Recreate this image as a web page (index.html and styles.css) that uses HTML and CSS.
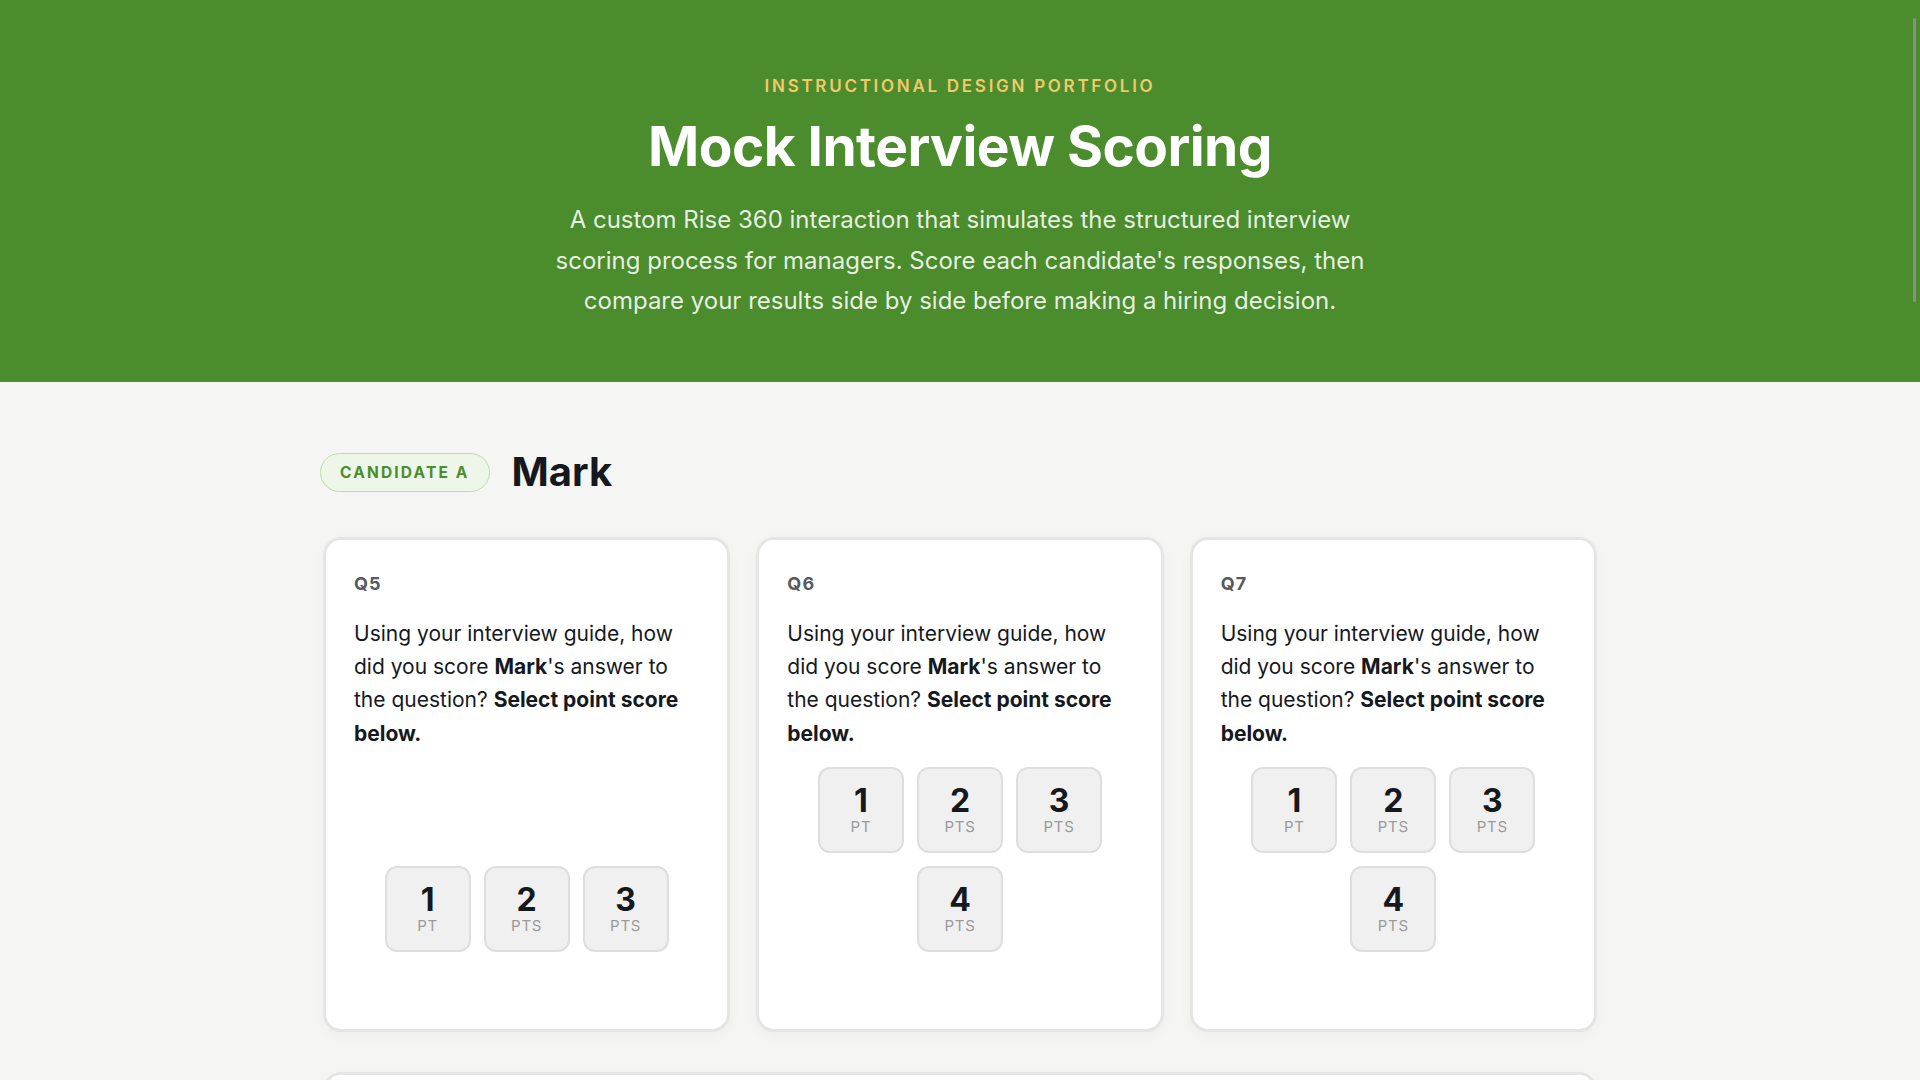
FILE: index.html
```html
<!DOCTYPE html>
<html lang="en">
<head>
<meta charset="utf-8">
<title>Mock Interview Scoring</title>
<link rel="stylesheet" href="styles.css">
</head>
<body>
<header class="hero">
  <div class="eyebrow">INSTRUCTIONAL DESIGN PORTFOLIO</div>
  <h1 class="title">Mock Interview Scoring</h1>
  <p class="lead">A custom Rise 360 interaction that simulates the structured interview scoring process for managers. Score each candidate's responses, then compare your results side by side before making a hiring decision.</p>
</header>
<main class="main">
  <div class="candidate">
    <span class="pill">CANDIDATE A</span>
    <h2 class="name">Mark</h2>
  </div>
  <section class="cards">
    <article class="card">
      <div class="qlabel">Q5</div>
      <p class="qtext">Using your interview guide, how did you score <b>Mark</b>'s answer to the question? <b>Select point score below.</b></p>
      <div class="scores">
        <button class="score"><span class="num">1</span><span class="unit">PT</span></button>
        <button class="score"><span class="num">2</span><span class="unit">PTS</span></button>
        <button class="score"><span class="num">3</span><span class="unit">PTS</span></button>
      </div>
    </article>
    <article class="card">
      <div class="qlabel">Q6</div>
      <p class="qtext">Using your interview guide, how did you score <b>Mark</b>'s answer to the question? <b>Select point score below.</b></p>
      <div class="scores">
        <button class="score"><span class="num">1</span><span class="unit">PT</span></button>
        <button class="score"><span class="num">2</span><span class="unit">PTS</span></button>
        <button class="score"><span class="num">3</span><span class="unit">PTS</span></button>
        <button class="score"><span class="num">4</span><span class="unit">PTS</span></button>
      </div>
    </article>
    <article class="card">
      <div class="qlabel">Q7</div>
      <p class="qtext">Using your interview guide, how did you score <b>Mark</b>'s answer to the question? <b>Select point score below.</b></p>
      <div class="scores">
        <button class="score"><span class="num">1</span><span class="unit">PT</span></button>
        <button class="score"><span class="num">2</span><span class="unit">PTS</span></button>
        <button class="score"><span class="num">3</span><span class="unit">PTS</span></button>
        <button class="score"><span class="num">4</span><span class="unit">PTS</span></button>
      </div>
    </article>
  </section>
  <section class="card wide"></section>
</main>
<div class="thumb"></div>
</body>
</html>
```
FILE: styles.css
```css
* { box-sizing: border-box; }
html, body { margin: 0; padding: 0; height: 1080px; overflow: hidden; }
body {
  font-family: "Inter", "Noto Sans", sans-serif;
  background: #f5f5f3;
  color: #15191e;
}
.hero {
  background: #4b8c2c;
  text-align: center;
  padding: 74px 20px 60px;
  height: 382px;
}
.eyebrow {
  color: #f3c96c;
  font-size: 17px;
  font-weight: 600;
  letter-spacing: 0.16em;
  line-height: 24px;
}
.title {
  margin: 16px 0 0;
  color: #ffffff;
  font-size: 55px;
  font-weight: 700;
  line-height: 64px;
  letter-spacing: -0.01em;
}
.lead {
  margin: 22px auto 0;
  max-width: 830px;
  color: rgba(255,255,255,0.88);
  font-size: 24px;
  line-height: 40.5px;
}
.main {
  width: 1280px;
  margin: 0 auto;
  padding-top: 66px;
}
.candidate {
  display: flex;
  align-items: center;
  gap: 22px;
}
.pill {
  display: inline-flex;
  align-items: center;
  height: 39px;
  padding: 0 19px;
  border: 1.5px solid #bddca9;
  background: #eef6ea;
  border-radius: 999px;
  color: #4b8c2c;
  font-size: 15.5px;
  font-weight: 700;
  letter-spacing: 0.14em;
}
.name {
  margin: 0;
  font-size: 40px;
  font-weight: 700;
  line-height: 48px;
}
.cards {
  margin: 41px 3px 0;
  display: grid;
  grid-template-columns: repeat(3, 1fr);
  gap: 26px;
}
.card {
  background: #ffffff;
  border: 3px solid #e5e5e5;
  border-radius: 18px;
  padding: 31.5px 28px 77px;
  display: flex;
  flex-direction: column;
  box-shadow: 0 4px 14px rgba(0,0,0,0.03);
}
.qlabel {
  font-size: 18px;
  font-weight: 700;
  color: #555a5f;
  letter-spacing: 0.06em;
  line-height: 24px;
}
.qtext {
  margin: 21px 0 0;
  font-size: 21px;
  line-height: 33.4px;
}
.qtext b { font-weight: 700; }
.scores {
  margin-top: auto;
  padding-top: 17px;
  display: flex;
  flex-wrap: wrap;
  justify-content: center;
  gap: 13px;
}
.score {
  width: 86px;
  height: 86px;
  background: #f0f0f0;
  border: 2px solid #dedede;
  border-radius: 12px;
  display: flex;
  flex-direction: column;
  align-items: center;
  justify-content: center;
  font-family: inherit;
  padding: 0;
  cursor: pointer;
}
.num {
  font-size: 32px;
  font-weight: 700;
  color: #15191e;
  line-height: 34px;
}
.unit {
  font-size: 15px;
  color: #9a9a9a;
  letter-spacing: 0.05em;
  line-height: 18px;
}
.wide {
  margin: 40px 3px 0;
  height: 300px;
}
.thumb {
  position: fixed;
  top: 18px;
  right: 4px;
  width: 3px;
  height: 284px;
  background: #8c8c8c;
  border-radius: 2px;
}
```
